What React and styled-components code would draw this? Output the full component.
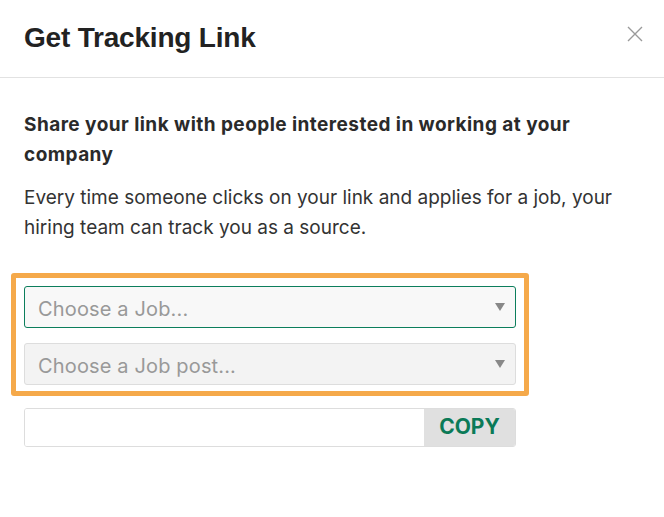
import styled, { createGlobalStyle } from 'styled-components'

const GlobalStyle = createGlobalStyle`
  html, body {
    margin: 0;
    padding: 0;
    background: #ffffff;
  }
  body {
    font-family: Inter, "Liberation Sans", Arial, sans-serif;
    color: #222222;
  }
`

const ChevronIcon = () => (
  <svg width="10" height="8" viewBox="0 0 10 8">
    <path d="M0 0 L10 0 L5 8 Z" fill="#888888" />
  </svg>
)

const CloseIcon = () => (
  <svg width="16" height="16" viewBox="0 0 16 16">
    <path d="M1 1 L15 15 M15 1 L1 15" stroke="#9a9a9a" strokeWidth="1.4" fill="none" />
  </svg>
)

const Select = ({ placeholder, active }) => (
  <SelectBox active={active}>
    <Placeholder>{placeholder}</Placeholder>
    <ChevronIcon />
  </SelectBox>
)

const App = () => {
  return (
    <>
      <GlobalStyle />
      <Modal>
        <Header>
          <Title>Get Tracking Link</Title>
          <CloseButton aria-label="Close">
            <CloseIcon />
          </CloseButton>
        </Header>
        <Body>
          <Lead>Share your link with people interested in working at your company</Lead>
          <Text>
            Every time someone clicks on your link and applies for a job, your hiring team can
            track you as a source.
          </Text>
          <Highlight>
            <Select placeholder="Choose a Job..." active />
            <Select placeholder="Choose a Job post..." />
          </Highlight>
          <CopyRow>
            <LinkInput readOnly value="" />
            <CopyButton>COPY</CopyButton>
          </CopyRow>
        </Body>
      </Modal>
    </>
  )
}

const Modal = styled.div`
  width: 664px;
  height: 517px;
  background: #ffffff;
  display: flex;
  flex-direction: column;
`

const Header = styled.div`
  height: 78px;
  box-sizing: border-box;
  border-bottom: 1px solid #e2e2e2;
  display: flex;
  align-items: center;
  justify-content: space-between;
  padding: 0 21px 2px 24px;
`

const Title = styled.h2`
  margin: 0;
  font-family: "Liberation Sans", Arial, sans-serif;
  font-size: 28px;
  font-weight: 700;
  color: #222222;
  letter-spacing: -0.2px;
`

const CloseButton = styled.button`
  border: none;
  background: none;
  padding: 0;
  margin-bottom: 7px;
  display: flex;
  cursor: pointer;
`

const Body = styled.div`
  padding: 32px 24px 0 24px;
  display: flex;
  flex-direction: column;
`

const Lead = styled.p`
  margin: 0;
  font-size: 19px;
  font-weight: 700;
  letter-spacing: 0.45px;
  line-height: 30px;
  color: #2a2a2a;
  width: 600px;
`

const Text = styled.p`
  margin: 13px 0 0 0;
  font-size: 19px;
  line-height: 30px;
  color: #333333;
  width: 600px;
`

const Highlight = styled.div`
  margin: 30px 0 0 -13px;
  width: 518px;
  box-sizing: border-box;
  border: 5px solid #f5a94a;
  border-radius: 3px;
  padding: 8px 8px 6px 8px;
  display: flex;
  flex-direction: column;
  gap: 15px;
`

const SelectBox = styled.div`
  height: 42px;
  box-sizing: border-box;
  border: 1px solid ${props => props.active ? '#0c7e5c' : '#dddddd'};
  border-radius: 3px;
  background: ${props => props.active ? '#f8f8f8' : '#f3f3f3'};
  display: flex;
  align-items: center;
  justify-content: space-between;
  padding: 0 10px 0 13px;
`

const Placeholder = styled.span`
  font-size: 20px;
  letter-spacing: 0.15px;
  color: #999999;
  padding-top: 4px;
`

const CopyRow = styled.div`
  margin-top: 12px;
  width: 492px;
  height: 39px;
  display: flex;
  border: 1px solid #dddddd;
  border-radius: 3px;
  box-sizing: border-box;
  overflow: hidden;
`

const LinkInput = styled.input`
  flex: 1;
  border: none;
  outline: none;
  background: #ffffff;
  font-size: 16px;
  padding: 0 10px;
`

const CopyButton = styled.button`
  width: 91px;
  border: none;
  background: #e0e0e0;
  color: #0a7a57;
  font-family: Inter, "Liberation Sans", Arial, sans-serif;
  font-size: 21px;
  font-weight: 700;
  padding: 0 0 3px 0;
  cursor: pointer;
`

export default App
